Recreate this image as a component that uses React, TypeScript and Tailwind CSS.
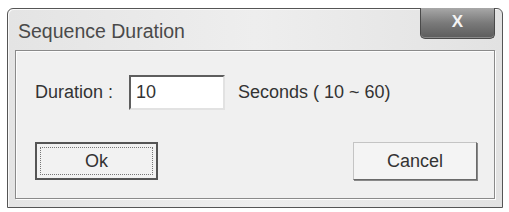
import React from 'react';

export default function App() {
  return (
    <div className="w-[509px] h-[212px] bg-white overflow-hidden" style={{ fontFamily: '"Liberation Sans", Arial, sans-serif' }}>
      <div className="ml-[7px] mt-[8px] w-[496px] h-[200px] flex flex-col border border-[#555] rounded-t-[6px] bg-gradient-to-r from-[#e4e4e4] via-[#eeeeee] to-[#e2e2e2] shadow-[inset_1px_1px_0_#fafafa]">
        {/* title bar */}
        <div className="h-[41px] flex items-start justify-between pl-[10px] pr-[7px]">
          <span className="pt-[11px] text-[19.5px] leading-[22px] text-[#4a4a4a]">Sequence Duration</span>
          <button className="w-[75px] h-[31px] -mt-px flex items-center justify-center rounded-b-[5px] border border-t-0 border-[#4a4a4a] bg-gradient-to-b from-[#a8a8a8] via-[#7a7a7a] to-[#5c5c5c] shadow-[inset_0_-1px_0_#8a8a8a]">
            <span className="text-[#f4f4f4] text-[17px] font-bold leading-none pb-[3px]">X</span>
          </button>
        </div>

        {/* client area */}
        <div className="mx-[7px] h-[149px] border border-[#8a8a8a] bg-[#f0f0f0] shadow-[1px_1px_0_#fdfdfd,inset_1px_1px_0_#fdfdfd] pl-[19px] pt-[24px]">
          <div className="flex items-center h-[35px] text-[18px] text-[#333]">
            <span className="w-[94px]">Duration :</span>
            <div className="w-[96px] h-[35px] bg-white border-2 border-t-[#5e5e5e] border-l-[#5e5e5e] border-b-[#e2e2e2] border-r-[#e2e2e2] flex items-center pl-[5px]">
              10
            </div>
            <span className="ml-[13px]">Seconds ( 10 ~ 60)</span>
          </div>

          <div className="mt-[32px] flex justify-between pr-[17px] text-[18px] text-[#333]">
            <button className="w-[123px] h-[38px] border-2 border-[#555] bg-[#f2f2f2] p-[3px]">
              <div className="w-full h-full border border-dotted border-[#777] flex items-center justify-center">Ok</div>
            </button>
            <button className="w-[124px] h-[38px] border border-[#c4c4c4] border-b-[#6a6a6a] border-r-[#6a6a6a] bg-[#f4f4f4] shadow-[1px_1px_0_#888] flex items-center justify-center">
              Cancel
            </button>
          </div>
        </div>
      </div>
    </div>
  );
}
